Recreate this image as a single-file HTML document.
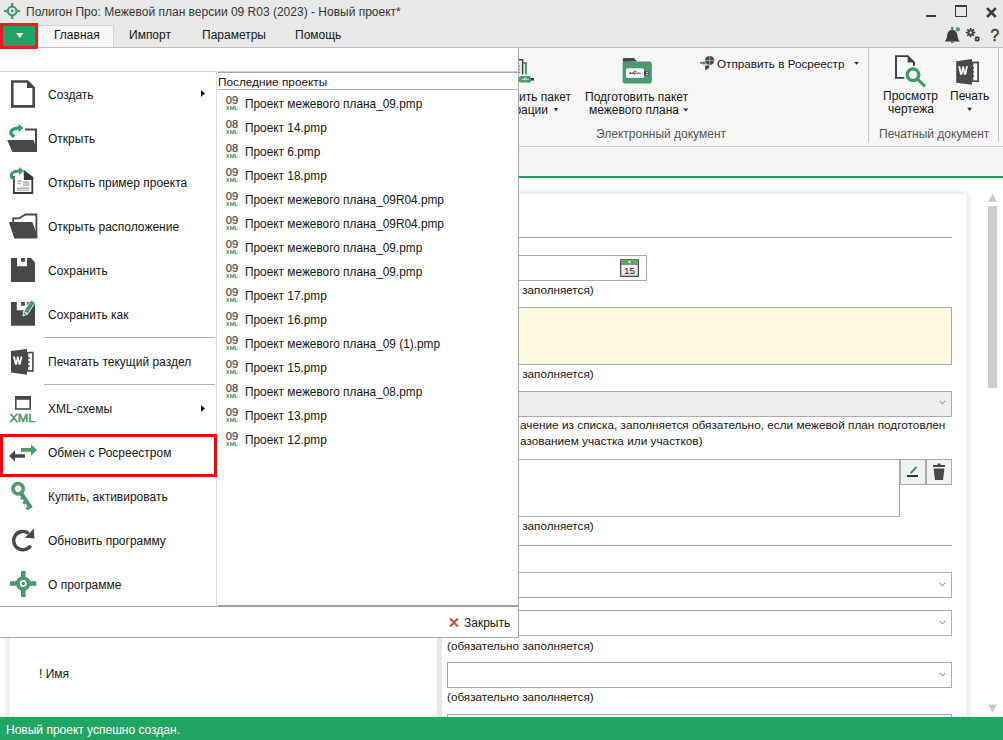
<!DOCTYPE html>
<html><head><meta charset="utf-8">
<style>
*{margin:0;padding:0;box-sizing:border-box}
html,body{width:1003px;height:740px;overflow:hidden;background:#fff;font-family:"Liberation Sans",sans-serif;font-size:12px;color:#151515}
.a{position:absolute}
.t{position:absolute;white-space:nowrap;line-height:16px;font-size:12px}
svg{position:absolute;overflow:visible}
.hint{font-size:11.7px}
</style></head><body>
<!-- title bar + tabs row -->
<div class="a" style="left:0;top:0;width:1003px;height:48px;background:#e9e9e9"></div>
<svg style="left:0;top:0" width="24" height="24"><g fill="#4a9670"><rect x="11" y="3" width="2.3" height="16"/><rect x="4" y="9.9" width="16" height="2.3"/></g><circle cx="12.15" cy="11" r="4.3" fill="#e9e9e9" stroke="#4a9670" stroke-width="2.3"/><circle cx="12.15" cy="11" r="1.4" fill="#4a9670"/></svg>
<div class="t" style="left:26px;top:4px;color:#333">Полигон Про: Межевой план версии 09 R03 (2023) - Новый проект*</div>
<!-- window controls -->
<div class="a" style="left:926px;top:14.5px;width:10px;height:2.5px;background:#3c3c3c"></div>
<div class="a" style="left:955px;top:5px;width:12px;height:12px;border:1.5px solid #3c3c3c;border-top-width:2px"></div>
<svg style="left:984px;top:5px" width="14" height="14"><path d="M3 3.2 L11.8 12 M11.8 3.2 L3 12" stroke="#3c3c3c" stroke-width="2.6"/></svg>
<!-- menu button -->
<!-- tabs -->
<div class="a" style="left:38px;top:25px;width:76px;height:22px;background:#f7f7f7;border:1px solid #d4d4d4;border-bottom:none"></div>
<div class="t" style="left:54px;top:27px">Главная</div>
<div class="t" style="left:129px;top:27px">Импорт</div>
<div class="t" style="left:202px;top:27px">Параметры</div>
<div class="t" style="left:295px;top:27px">Помощь</div>
<div class="a" style="left:0;top:47px;width:1003px;height:1px;background:#bdbdbd"></div>

<!-- ribbon -->
<div class="a" style="left:0;top:48px;width:1003px;height:98px;background:#f7f7f7"></div>
<div class="a" style="left:0;top:146px;width:1003px;height:1px;background:#cfcfcf"></div>
<div class="a" style="left:0;top:147px;width:1003px;height:29px;background:#f5f5f5"></div>
<div class="a" style="left:0;top:176px;width:1003px;height:2px;background:#1f9d5c"></div>

<!-- ribbon groups -->
<div class="t" style="left:519px;top:89px">ить пакет</div>
<div class="t" style="left:514.4px;top:102px">рации</div>
<div class="t" style="left:585px;top:89px">Подготовить пакет</div>
<div class="t" style="left:589px;top:102px">межевого плана</div>
<div class="t" style="left:717px;top:56px;font-size:11.7px">Отправить в Росреестр</div>
<div class="t" style="left:596px;top:126px;color:#555">Электронный документ</div>
<div class="a" style="left:868px;top:47px;width:1px;height:95px;background:#c6c6c6"></div>
<div class="a" style="left:998px;top:47px;width:1px;height:95px;background:#c6c6c6"></div>
<div class="t" style="left:883px;top:88px">Просмотр</div>
<div class="t" style="left:888px;top:101px">чертежа</div>
<div class="t" style="left:950px;top:88px">Печать</div>
<div class="t" style="left:879px;top:126px;color:#555">Печатный документ</div>
<svg style="left:0;top:0" width="1003" height="150">
<!-- dropdown arrows -->
<g fill="#222"><path d="M554 108 H558 L556 111.4 Z"/><path d="M683.4 108.5 H688.2 L685.8 111.4 Z"/><path d="M854.2 62 H858.8 L856.5 64.8 Z"/><path d="M967.3 107.8 H972 L969.65 111 Z"/></g>
<!-- partial usb icon -->
<path d="M519 59.8 H522.6 V74.6" fill="none" stroke="#3a3a3a" stroke-width="1.5"/>
<path d="M523 63 H525.9 V74.6" fill="none" stroke="#4a9a6e" stroke-width="2"/>
<g fill="#4a9a6e"><circle cx="519.6" cy="66.2" r="0.8"/><circle cx="519.6" cy="69.2" r="0.8"/><circle cx="519.6" cy="72.2" r="0.8"/></g>
<rect x="519" y="76" width="12" height="6.6" rx="1.5" fill="#4a9a6e"/>
<rect x="531" y="78" width="3" height="2.6" fill="#3a3a3a"/>
<path d="M521.5 79.3 H529 M523.5 79.3 L525 78 H526.5 M524.5 79.3 L526 80.5" stroke="#e8f0ea" stroke-width="0.8" fill="none"/>
<!-- folder usb -->
<path d="M622.8 62 V59.5 Q622.8 58.1 624.2 58.1 H634 L637 61.4 Z" fill="#484848"/>
<rect x="622.6" y="61.4" width="29.2" height="22" rx="2" fill="#4a9a6e"/>
<rect x="626" y="68.2" width="18" height="9.9" rx="1.8" fill="#f2f2f2"/>
<rect x="644" y="71" width="4.6" height="4.6" fill="#484848"/>
<g fill="#fff"><rect x="646.3" y="71.8" width="1.4" height="1.2"/><rect x="646.3" y="73.8" width="1.4" height="1.2"/></g>
<path d="M630 73.2 H639.5 M632.5 73.2 L634.5 71.3 H636.5 M633.5 73.2 L635 75" stroke="#444" stroke-width="0.9" fill="none"/>
<circle cx="630.2" cy="73.2" r="0.9" fill="#444"/><path d="M639.6 72 L640.8 73.2 L639.6 74.4 Z" fill="#444"/>
<!-- send icon -->
<circle cx="709.7" cy="60.5" r="4.6" fill="#484848"/>
<path d="M705.1 65.2 H709.5 A4.4 4.4 0 0 1 705.1 69.9 Z" fill="#484848"/>
<path d="M704.8 60.5 H714.6 M709.7 55.6 V65.2 M704.8 65 H710" stroke="#b8b8b8" stroke-width="0.8"/>
<path d="M700 62.9 H704" stroke="#3f9a68" stroke-width="1.9"/>
<path d="M703.4 60.9 L706.3 62.9 L703.4 64.9 Z" fill="#3f9a68"/>
<!-- preview icon -->
<path d="M904.3 77.9 H896 V56.1 H907.8 L914 62.3 V65.8" fill="none" stroke="#3c3c3c" stroke-width="1.9"/>
<path d="M907.6 55.3 L914.9 62.6 H907.6 Z" fill="#484848"/>
<circle cx="913" cy="74.7" r="5.8" fill="none" stroke="#3f9a68" stroke-width="3.3"/>
<path d="M917.3 79 L925 86.4" stroke="#3f9a68" stroke-width="3"/>
<!-- word icon -->
<path d="M956.2 61.2 L971.9 59.1 V84.7 L956.2 82.8 Z" fill="#484848"/>
<rect x="972.4" y="62.5" width="5.7" height="18.7" fill="none" stroke="#484848" stroke-width="1.7"/>
<g fill="#484848"><rect x="971.5" y="67.2" width="2.4" height="1.7"/><rect x="971.5" y="70.9" width="2.4" height="1.7"/><rect x="971.5" y="75" width="2.4" height="1.7"/></g>
<path d="M958.1 66.3 H960.2 L961.3 71.8 L962.4 66.3 H963.9 L965 71.8 L966.1 66.3 H968 L966 74.7 H964 L963.15 70.4 L962.3 74.7 H960.2 Z" fill="#fff"/>
<!-- title bar icons: bell gear help -->
<path d="M944.6 41.5 Q946.5 40 947 36.5 Q947.3 30.5 952.2 29.3 Q957.2 30.5 957.6 36.5 Q958 40 960 41.5 Z" fill="#3c3c3c"/>
<rect x="951.2" y="27.2" width="2" height="1.6" fill="#3c3c3c"/>
<rect x="951" y="41.8" width="2.6" height="1" fill="#3c3c3c"/>
<circle cx="957.8" cy="29.4" r="2.1" fill="#3f9a68"/>
<g transform="translate(970.6 32.6)"><g stroke="#3c3c3c" stroke-width="1.7"><path d="M0 -4.7 V4.7 M-4.7 0 H4.7 M-3.3 -3.3 L3.3 3.3 M-3.3 3.3 L3.3 -3.3"/></g><circle r="2.9" fill="#3c3c3c"/><circle r="1.3" fill="#e9e9e9"/></g>
<g transform="translate(977.2 39)"><g stroke="#3c3c3c" stroke-width="1.2"><path d="M0 -2.8 V2.8 M-2.8 0 H2.8 M-2 -2 L2 2 M-2 2 L2 -2"/></g><circle r="1.8" fill="#3c3c3c"/><circle r="0.8" fill="#e9e9e9"/></g>
<text x="990.6" y="41.1" font-size="15.6" fill="#3c3c3c" stroke="#3c3c3c" stroke-width="0.5" font-family="Liberation Sans">?</text>
</svg>
<!-- content area -->
<div class="a" style="left:9px;top:194px;width:958px;height:600px;background:#fff;border-radius:3px;box-shadow:0 0 7px rgba(0,0,0,0.2)"></div>
<div class="a" style="left:437px;top:238px;width:5px;height:479px;background:#e9e9e9"></div>
<div class="a" style="left:20px;top:237px;width:932px;height:1px;background:#a6a6a6"></div>
<div class="a" style="left:447px;top:255px;width:200px;height:26px;border:1px solid #aaaab2"></div>
<svg style="left:619px;top:258px" width="22" height="22"><defs><linearGradient id="cg" x1="0" y1="0" x2="0" y2="1"><stop offset="0" stop-color="#fafafa"/><stop offset="1" stop-color="#e2e6ea"/></linearGradient></defs><rect x="1.7" y="1.8" width="17.6" height="16.5" fill="url(#cg)" stroke="#333" stroke-width="1.1"/><rect x="2.2" y="2.3" width="16.6" height="3.4" fill="#4caf50"/><rect x="2.2" y="5.7" width="16.6" height="0.9" fill="#444"/><circle cx="10.5" cy="3.9" r="1.1" fill="#fff"/><text x="5" y="15.9" font-size="9.8" font-family="Liberation Sans" fill="#222" textLength="11" lengthAdjust="spacingAndGlyphs">15</text></svg>
<div class="t hint" style="left:447px;top:282px">(обязательно заполняется)</div>
<div class="a" style="left:447px;top:307px;width:505px;height:58px;border:1px solid #aaaab2;background:#fefbe0"></div>
<div class="t hint" style="left:447px;top:366px">(обязательно заполняется)</div>
<div class="a" style="left:447px;top:391px;width:505px;height:26px;border:1px solid #aaaab2;background:#efefef"></div>
<svg class="chev" style="left:939px;top:400px" width="8" height="6"><path d="M0.8 0.8 L3.5 3.8 L6.2 0.8" fill="none" stroke="#9a9aa2" stroke-width="1.1"/></svg>
<div class="t" style="left:520px;top:417px;font-size:11.8px">ачение из списка, заполняется обязательно, если межевой план подготовлен</div>
<div class="t" style="left:520px;top:433px;font-size:11.8px">азованием участка или участков)</div>
<div class="a" style="left:447px;top:459px;width:453px;height:58px;border:1px solid #aaaab2;background:#fff"></div>
<div class="a" style="left:900px;top:459px;width:26px;height:26px;border:1px solid #aaaab2;background:#eef2f0"></div>
<div class="a" style="left:926px;top:459px;width:26px;height:26px;border:1px solid #aaaab2;background:#eef2f0"></div>
<svg style="left:900px;top:459px" width="52" height="26"><rect x="7" y="16" width="11" height="2" fill="#333"/><path d="M10.5 14.3 L16.5 8" stroke="#3f9a68" stroke-width="2"/><rect x="33" y="6" width="12" height="2" fill="#484848"/><rect x="37.5" y="4.5" width="3" height="2" fill="#484848"/><path d="M33.6 9.6 H44.4 L43 21 H35 Z" fill="#484848"/></svg>
<div class="t hint" style="left:447px;top:518px">(обязательно заполняется)</div>
<div class="a" style="left:20px;top:545px;width:932px;height:1px;background:#a6a6a6"></div>
<div class="a" style="left:447px;top:572px;width:505px;height:26px;border:1px solid #aaaab2"></div>
<svg style="left:939px;top:582px" width="8" height="6"><path d="M0.8 0.8 L3.5 3.8 L6.2 0.8" fill="none" stroke="#9a9aa2" stroke-width="1.1"/></svg>
<div class="a" style="left:447px;top:610px;width:505px;height:26px;border:1px solid #aaaab2"></div>
<svg style="left:939px;top:620px" width="8" height="6"><path d="M0.8 0.8 L3.5 3.8 L6.2 0.8" fill="none" stroke="#9a9aa2" stroke-width="1.1"/></svg>
<div class="t hint" style="left:447px;top:638px">(обязательно заполняется)</div>
<div class="a" style="left:447px;top:662px;width:505px;height:26px;border:1px solid #aaaab2"></div>
<svg style="left:939px;top:672px" width="8" height="6"><path d="M0.8 0.8 L3.5 3.8 L6.2 0.8" fill="none" stroke="#9a9aa2" stroke-width="1.1"/></svg>
<div class="t hint" style="left:447px;top:689px">(обязательно заполняется)</div>
<div class="a" style="left:447px;top:714px;width:505px;height:26px;border:1px solid #aaaab2"></div>
<div class="t" style="left:39px;top:666px">! Имя</div>
<!-- scrollbar -->
<svg style="left:986px;top:192px" width="14" height="12"><path d="M2 10 L6.5 1.5 L11 10 Z" fill="#cdcdcd"/></svg>
<div class="a" style="left:988px;top:206px;width:9px;height:182px;background:#cdcdcd"></div>
<svg style="left:986px;top:703px" width="14" height="12"><path d="M2 1.5 L11 1.5 L6.5 10 Z" fill="#cdcdcd"/></svg>

<!-- status bar -->
<div class="a" style="left:0;top:717px;width:1003px;height:23px;background:#22a462"></div>
<div class="t" style="left:6px;top:722px;color:#fff">Новый проект успешно создан.</div>

<!-- MENU -->
<div class="a" style="left:0;top:48px;width:519px;height:590px;background:#fff;border-right:1px solid #a9a9a9;border-bottom:1px solid #a9a9a9"></div>
<div class="a" style="left:0;top:71px;width:217px;height:1px;background:#d2d2d2"></div>
<div class="a" style="left:218px;top:71px;width:300px;height:1px;background:#cfcfcf"></div><div class="a" style="left:218px;top:72px;width:300px;height:1px;background:#a8a8a8"></div>
<div class="a" style="left:216px;top:71px;width:1px;height:535px;background:#dcdcdc"></div>
<div class="a" style="left:0;top:606px;width:218px;height:1px;background:#a8a8a8"></div><div class="a" style="left:218px;top:605px;width:300px;height:2px;background:#a2a2a2"></div>
<div class="a" style="left:218px;top:89px;width:299px;height:1px;background:#b0b0b0"></div>
<div class="t" style="left:218px;top:74px;font-size:11.8px">Последние проекты</div>
<div class="a" style="left:44px;top:337px;width:171px;height:1px;background:#b4b4b4"></div>
<div class="a" style="left:44px;top:384px;width:171px;height:1px;background:#b4b4b4"></div>
<div class="t" style="left:48px;top:87px">Создать</div>
<div class="t" style="left:48px;top:131px">Открыть</div>
<div class="t" style="left:48px;top:175px">Открыть пример проекта</div>
<div class="t" style="left:48px;top:219px">Открыть расположение</div>
<div class="t" style="left:48px;top:263px">Сохранить</div>
<div class="t" style="left:48px;top:307px">Сохранить как</div>
<div class="t" style="left:48px;top:354px">Печатать текущий раздел</div>
<div class="t" style="left:48px;top:401px">XML-схемы</div>
<div class="t" style="left:48px;top:445px">Обмен с Росреестром</div>
<div class="t" style="left:48px;top:489px">Купить, активировать</div>
<div class="t" style="left:48px;top:533px">Обновить программу</div>
<div class="t" style="left:48px;top:577px">О программе</div>
<svg style="left:0;top:0" width="520" height="640">
<path d="M201 90 L205 93.5 L201 97 Z" fill="#111"/>
<path d="M201 405 L205 408.5 L201 412 Z" fill="#111"/>
<!-- new doc -->
<path d="M12.3 81.5 H27.5 L33.7 87.7 V106.4 H12.3 Z" fill="none" stroke="#484848" stroke-width="2.6"/>
<path d="M27 81 L34 88 L27 88 Z" fill="#484848"/>
<!-- open -->
<path d="M7.2 140 H33.7 L37 152 H12.4 Z" fill="#484848"/>
<path d="M25 129.6 H36 V152" fill="none" stroke="#484848" stroke-width="2"/>
<path d="M14.3 136.5 C9 134 9.5 128.5 19 128.2" fill="none" stroke="#1fa45e" stroke-width="3.2"/>
<path d="M18.5 124 L23.5 128 L18.5 132.2 Z" fill="#1fa45e"/>
<!-- open example -->
<path d="M13.9 176 V193 H32.3 V177" fill="none" stroke="#383838" stroke-width="1.8"/>
<path d="M23.5 169.8 L33.2 177 V180 H24 Z" fill="#383838"/>
<g fill="#b0b0b0"><rect x="17.2" y="180.5" width="4.5" height="1.5"/><rect x="17.2" y="183" width="4" height="1.3"/><rect x="23" y="181" width="6.4" height="5" fill="#c4c4c4"/><rect x="17.2" y="187.5" width="12.2" height="1.5"/><rect x="17.2" y="189.6" width="12.2" height="1.2"/></g>
<path d="M14.6 179.2 C9.5 177 10 171 19.5 171" fill="none" stroke="#3a9c66" stroke-width="3"/>
<path d="M19 167 L23.7 171 L19 175 Z" fill="#3a9c66"/>
<!-- open location -->
<path d="M13.2 222.5 V218.3 H19.1 L25.6 214.5 H36.4 V237.7" fill="none" stroke="#484848" stroke-width="1.8"/>
<path d="M8.9 222.1 H32.3 L37.3 236 V238.6 H14.3 Z" fill="#484848"/>
<!-- save -->
<path d="M11 258 H17 V266.2 H27 V258 H31 L35 262.6 V282 H11 Z" fill="#484848"/>
<rect x="21.1" y="258" width="3.8" height="3.7" fill="#484848"/>
<!-- save as -->
<path d="M11 302 H16.8 V310.3 H27.2 V302 H33.2 L35 304 V325.7 H11 Z" fill="#484848"/>
<rect x="21.2" y="302" width="3.6" height="3.7" fill="#484848"/>
<path d="M31.2 300 L35.2 302.6 L27.6 314 L23.6 311.4 Z" fill="#3f9a68" stroke="#fff" stroke-width="0.9"/>
<path d="M23.6 311.4 L27.6 314 L22.9 316 Z" fill="#3f9a68" stroke="#fff" stroke-width="0.9"/>
<!-- word -->
<path d="M11 351 L27 349.1 V374.8 L11 372.6 Z" fill="#484848"/>
<rect x="27.5" y="352.6" width="5.4" height="18.4" fill="none" stroke="#484848" stroke-width="1.6"/>
<g fill="#484848"><rect x="27" y="357.3" width="2.6" height="1.6"/><rect x="27" y="361.2" width="2.6" height="1.6"/><rect x="27" y="365.2" width="2.6" height="1.6"/></g>
<path d="M12.9 356.4 H14.9 L16 361.5 L17 356.4 H18.6 L19.6 361.5 L20.6 356.4 H22.4 L20.6 364.8 H18.7 L17.8 360.5 L16.9 364.8 H15 Z" fill="#fff"/>
<!-- xml -->
<rect x="15.8" y="396.8" width="14.4" height="12.2" fill="none" stroke="#484848" stroke-width="1.6"/>
<rect x="15" y="396" width="16" height="3.8" fill="#484848"/>
<text x="9.4" y="422" font-size="11.4" textLength="26" lengthAdjust="spacingAndGlyphs" fill="#4a9a6e" stroke="#4a9a6e" stroke-width="0.55" font-family="Liberation Sans">XML</text>
<!-- exchange arrows -->
<path d="M9 456 L15 450.4 V454.2 H25 V457.7 H15 V461.8 Z" fill="#484848"/>
<path d="M37 450 L31 444.3 V448 H21 V451.8 H31 V455.7 Z" fill="#4a9a6e"/>
<!-- key -->
<g transform="translate(18.1 488.7) rotate(56)" fill="#4a9a6e"><circle r="5.1" fill="none" stroke="#4a9a6e" stroke-width="3.7"/><rect x="5" y="-2" width="18.3" height="4.1"/><rect x="9" y="1.5" width="2.2" height="2.2"/><rect x="13.6" y="1.5" width="3" height="2.6"/><rect x="20" y="1.5" width="3.3" height="2.8"/></g>
<!-- refresh -->
<path d="M30.5 545.8 A9.2 9.2 0 1 1 28.6 533.4" fill="none" stroke="#484848" stroke-width="3.4"/>
<path d="M34 528.5 L34.3 538.5 L24.8 537.8 Z" fill="#484848"/>
<!-- about -->
<g fill="#4a9a6e"><rect x="21" y="571" width="4.6" height="26"/><rect x="10" y="581.2" width="26.3" height="4.6"/></g>
<circle cx="23.2" cy="583.5" r="5.4" fill="#fff" stroke="#4a9a6e" stroke-width="3.8"/>
<circle cx="23.2" cy="583.5" r="1.8" fill="#4a9a6e"/>
</svg>
<div class="t" style="left:245px;top:96px;font-size:11.85px">Проект межевого плана_09.pmp</div>
<div class="t" style="left:245px;top:120px;font-size:11.85px">Проект 14.pmp</div>
<div class="t" style="left:245px;top:144px;font-size:11.85px">Проект 6.pmp</div>
<div class="t" style="left:245px;top:168px;font-size:11.85px">Проект 18.pmp</div>
<div class="t" style="left:245px;top:192px;font-size:11.85px">Проект межевого плана_09R04.pmp</div>
<div class="t" style="left:245px;top:216px;font-size:11.85px">Проект межевого плана_09R04.pmp</div>
<div class="t" style="left:245px;top:240px;font-size:11.85px">Проект межевого плана_09.pmp</div>
<div class="t" style="left:245px;top:264px;font-size:11.85px">Проект межевого плана_09.pmp</div>
<div class="t" style="left:245px;top:288px;font-size:11.85px">Проект 17.pmp</div>
<div class="t" style="left:245px;top:312px;font-size:11.85px">Проект 16.pmp</div>
<div class="t" style="left:245px;top:336px;font-size:11.85px">Проект межевого плана_09 (1).pmp</div>
<div class="t" style="left:245px;top:360px;font-size:11.85px">Проект 15.pmp</div>
<div class="t" style="left:245px;top:384px;font-size:11.85px">Проект межевого плана_08.pmp</div>
<div class="t" style="left:245px;top:408px;font-size:11.85px">Проект 13.pmp</div>
<div class="t" style="left:245px;top:432px;font-size:11.85px">Проект 12.pmp</div>
<svg style="left:0;top:0" width="260" height="460"><text x="225.8" y="104" font-size="10.6" textLength="12.4" lengthAdjust="spacingAndGlyphs" fill="#4a4a4a" stroke="#4a4a4a" stroke-width="0.25">09</text><text x="225.8" y="110" font-size="5.8" font-weight="bold" textLength="12.2" lengthAdjust="spacingAndGlyphs" fill="#3a8f5e">XML</text><text x="225.8" y="128" font-size="10.6" textLength="12.4" lengthAdjust="spacingAndGlyphs" fill="#4a4a4a" stroke="#4a4a4a" stroke-width="0.25">08</text><text x="225.8" y="134" font-size="5.8" font-weight="bold" textLength="12.2" lengthAdjust="spacingAndGlyphs" fill="#3a8f5e">XML</text><text x="225.8" y="152" font-size="10.6" textLength="12.4" lengthAdjust="spacingAndGlyphs" fill="#4a4a4a" stroke="#4a4a4a" stroke-width="0.25">08</text><text x="225.8" y="158" font-size="5.8" font-weight="bold" textLength="12.2" lengthAdjust="spacingAndGlyphs" fill="#3a8f5e">XML</text><text x="225.8" y="176" font-size="10.6" textLength="12.4" lengthAdjust="spacingAndGlyphs" fill="#4a4a4a" stroke="#4a4a4a" stroke-width="0.25">09</text><text x="225.8" y="182" font-size="5.8" font-weight="bold" textLength="12.2" lengthAdjust="spacingAndGlyphs" fill="#3a8f5e">XML</text><text x="225.8" y="200" font-size="10.6" textLength="12.4" lengthAdjust="spacingAndGlyphs" fill="#4a4a4a" stroke="#4a4a4a" stroke-width="0.25">09</text><text x="225.8" y="206" font-size="5.8" font-weight="bold" textLength="12.2" lengthAdjust="spacingAndGlyphs" fill="#3a8f5e">XML</text><text x="225.8" y="224" font-size="10.6" textLength="12.4" lengthAdjust="spacingAndGlyphs" fill="#4a4a4a" stroke="#4a4a4a" stroke-width="0.25">09</text><text x="225.8" y="230" font-size="5.8" font-weight="bold" textLength="12.2" lengthAdjust="spacingAndGlyphs" fill="#3a8f5e">XML</text><text x="225.8" y="248" font-size="10.6" textLength="12.4" lengthAdjust="spacingAndGlyphs" fill="#4a4a4a" stroke="#4a4a4a" stroke-width="0.25">09</text><text x="225.8" y="254" font-size="5.8" font-weight="bold" textLength="12.2" lengthAdjust="spacingAndGlyphs" fill="#3a8f5e">XML</text><text x="225.8" y="272" font-size="10.6" textLength="12.4" lengthAdjust="spacingAndGlyphs" fill="#4a4a4a" stroke="#4a4a4a" stroke-width="0.25">09</text><text x="225.8" y="278" font-size="5.8" font-weight="bold" textLength="12.2" lengthAdjust="spacingAndGlyphs" fill="#3a8f5e">XML</text><text x="225.8" y="296" font-size="10.6" textLength="12.4" lengthAdjust="spacingAndGlyphs" fill="#4a4a4a" stroke="#4a4a4a" stroke-width="0.25">09</text><text x="225.8" y="302" font-size="5.8" font-weight="bold" textLength="12.2" lengthAdjust="spacingAndGlyphs" fill="#3a8f5e">XML</text><text x="225.8" y="320" font-size="10.6" textLength="12.4" lengthAdjust="spacingAndGlyphs" fill="#4a4a4a" stroke="#4a4a4a" stroke-width="0.25">09</text><text x="225.8" y="326" font-size="5.8" font-weight="bold" textLength="12.2" lengthAdjust="spacingAndGlyphs" fill="#3a8f5e">XML</text><text x="225.8" y="344" font-size="10.6" textLength="12.4" lengthAdjust="spacingAndGlyphs" fill="#4a4a4a" stroke="#4a4a4a" stroke-width="0.25">09</text><text x="225.8" y="350" font-size="5.8" font-weight="bold" textLength="12.2" lengthAdjust="spacingAndGlyphs" fill="#3a8f5e">XML</text><text x="225.8" y="368" font-size="10.6" textLength="12.4" lengthAdjust="spacingAndGlyphs" fill="#4a4a4a" stroke="#4a4a4a" stroke-width="0.25">09</text><text x="225.8" y="374" font-size="5.8" font-weight="bold" textLength="12.2" lengthAdjust="spacingAndGlyphs" fill="#3a8f5e">XML</text><text x="225.8" y="392" font-size="10.6" textLength="12.4" lengthAdjust="spacingAndGlyphs" fill="#4a4a4a" stroke="#4a4a4a" stroke-width="0.25">08</text><text x="225.8" y="398" font-size="5.8" font-weight="bold" textLength="12.2" lengthAdjust="spacingAndGlyphs" fill="#3a8f5e">XML</text><text x="225.8" y="416" font-size="10.6" textLength="12.4" lengthAdjust="spacingAndGlyphs" fill="#4a4a4a" stroke="#4a4a4a" stroke-width="0.25">09</text><text x="225.8" y="422" font-size="5.8" font-weight="bold" textLength="12.2" lengthAdjust="spacingAndGlyphs" fill="#3a8f5e">XML</text><text x="225.8" y="440" font-size="10.6" textLength="12.4" lengthAdjust="spacingAndGlyphs" fill="#4a4a4a" stroke="#4a4a4a" stroke-width="0.25">09</text><text x="225.8" y="446" font-size="5.8" font-weight="bold" textLength="12.2" lengthAdjust="spacingAndGlyphs" fill="#3a8f5e">XML</text></svg>
<svg style="left:448px;top:616px" width="14" height="14"><path d="M2 2.5 L10 10.5 M10 2.5 L2 10.5" stroke="#c0573a" stroke-width="2.2"/></svg>
<div class="t" style="left:464px;top:615px">Закрыть</div>
<!-- menu button -->
<div class="a" style="left:0;top:23px;width:38px;height:26px;border:3px solid #ee1c24;background:#21a366"></div>
<svg style="left:0;top:0" width="40" height="40"><path d="M16 33 L23.5 33 L19.75 38 Z" fill="#fff"/></svg>
<!-- red box -->
<div class="a" style="left:0;top:434px;width:217px;height:43px;border:3px solid #ff0000"></div>

</body></html>
